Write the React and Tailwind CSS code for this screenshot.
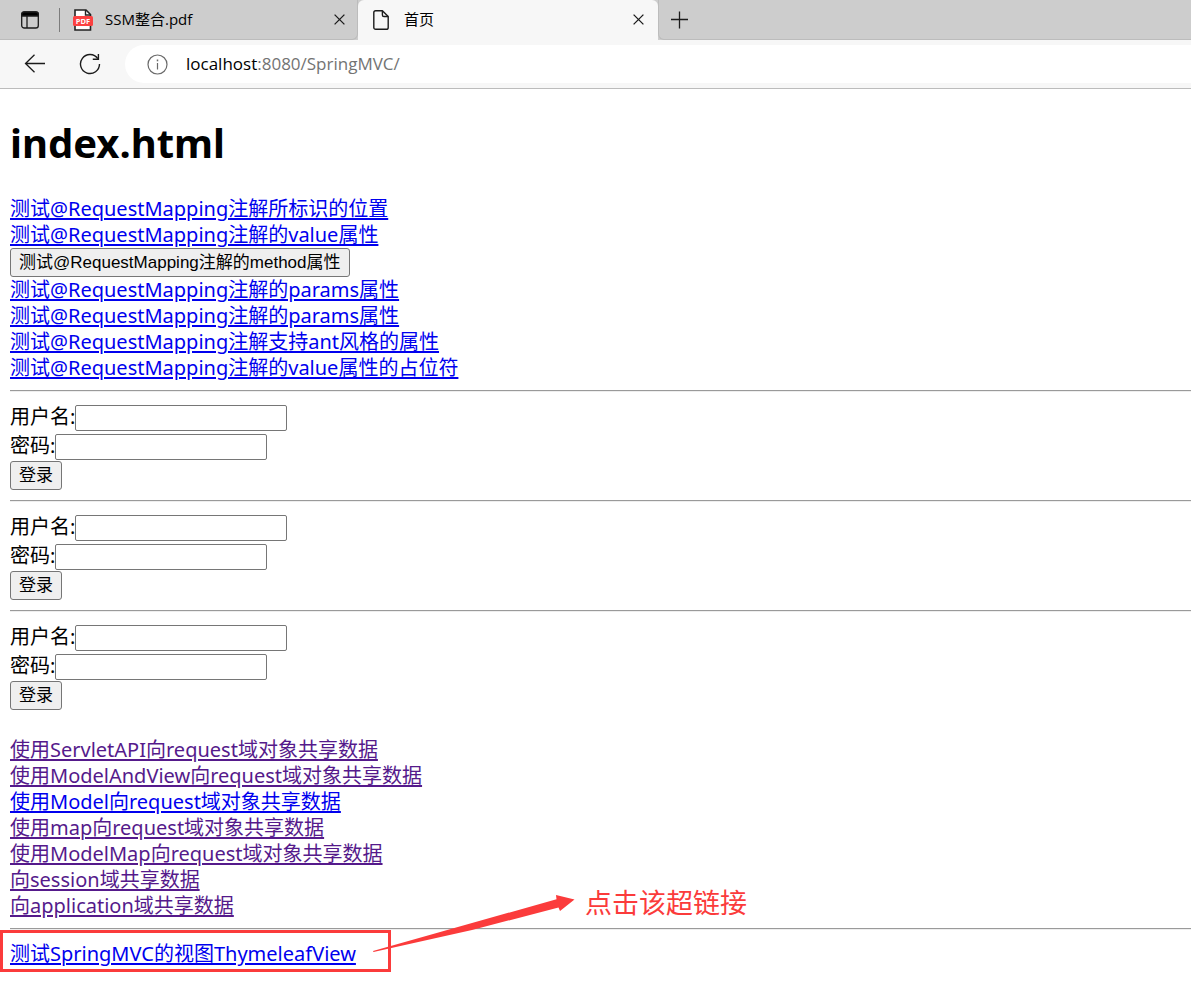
import React from "react";

const mappingLinksBefore = [
  "测试@RequestMapping注解所标识的位置",
  "测试@RequestMapping注解的value属性",
];

const mappingLinksAfter = [
  "测试@RequestMapping注解的params属性",
  "测试@RequestMapping注解的params属性",
  "测试@RequestMapping注解支持ant风格的属性",
  "测试@RequestMapping注解的value属性的占位符",
];

const scopeLinks = [
  { text: "使用ServletAPI向request域对象共享数据", visited: true },
  { text: "使用ModelAndView向request域对象共享数据", visited: true },
  { text: "使用Model向request域对象共享数据", visited: false },
  { text: "使用map向request域对象共享数据", visited: true },
  { text: "使用ModelMap向request域对象共享数据", visited: true },
  { text: "向session域共享数据", visited: true },
  { text: "向application域共享数据", visited: true },
];

function PageLink({ children, visited = false }) {
  return (
    <a
      href="#"
      className={
        visited
          ? "whitespace-nowrap text-[#551a8b] underline decoration-2 underline-offset-2"
          : "whitespace-nowrap text-[#0000ee] underline decoration-2 underline-offset-2"
      }
    >
      {children}
    </a>
  );
}

function LinkList({ items }) {
  return (
    <ul>
      {items.map((item, i) => (
        <li key={i}>
          <PageLink visited={item.visited}>{item.text}</PageLink>
        </li>
      ))}
    </ul>
  );
}

function PlainButton({ children, type = "button" }) {
  return (
    <button
      type={type}
      className="block h-[29px] rounded-[3px] border border-[#767676] bg-[#efefef] px-2 font-['Liberation_Sans','Noto_Sans_CJK_SC',sans-serif] text-[17px] leading-[27px] whitespace-nowrap text-black"
    >
      {children}
    </button>
  );
}

function Rule() {
  return <hr className="h-[2px] border-t border-b border-t-[#9a9a9a] border-b-[#eeeeee]" />;
}

function Field({ id, label, type }) {
  return (
    <div className="flex items-center">
      <label htmlFor={id}>{label}</label>
      <input
        id={id}
        type={type}
        className="mt-[3px] h-[26px] w-[212px] rounded-[2px] border border-[#767676] bg-white px-1 text-[17px]"
      />
    </div>
  );
}

function LoginForm({ index }) {
  return (
    <form className="py-[10px]" onSubmit={(e) => e.preventDefault()}>
      <Field id={"username-" + index} label="用户名:" type="text" />
      <Field id={"password-" + index} label="密码:" type="password" />
      <div className="pt-px">
        <PlainButton type="submit">登录</PlainButton>
      </div>
    </form>
  );
}

function CloseIcon() {
  return (
    <svg width="11" height="11" viewBox="0 0 11 11" fill="none" stroke="#1b1b1b" strokeWidth="1.3">
      <path d="M.6.6l9.800 9.800M10.400.6L.6 10.400" />
    </svg>
  );
}

function TabBar() {
  return (
    <div className="flex h-10 bg-[#cdcdcd] text-[15px] text-black">
      <div className="flex min-w-0 flex-1">
        <div className="flex w-[358px] shrink-0 items-center rounded-br-md border-r border-b border-[#bcbcbc] pr-3 pl-5">
          <button type="button" aria-label="标签页操作" className="shrink-0">
            <svg width="20" height="20" viewBox="0 0 20 20" fill="none" stroke="#1b1b1b" strokeWidth="1.3">
              <rect x="1.7" y="2" width="16.6" height="16" rx="2.6" />
              <path d="M1.7 6V4.6A2.6 2.6 0 0 1 4.3 2h11.4a2.6 2.6 0 0 1 2.6 2.6V6z" fill="#000" />
              <path d="M7 6v12" />
            </svg>
          </button>
          <span className="ml-[19px] h-6 w-px shrink-0 bg-[#7c7c7c]" />
          <svg className="ml-[13px] shrink-0" width="20" height="22" viewBox="0 0 20 22">
            <path d="M2 1h11l4.5 4.5V21H2z" fill="#fff" stroke="#222" strokeWidth="1.6" />
            <path d="M12.5 1v5h5" fill="none" stroke="#222" strokeWidth="1.4" />
            <rect x="0" y="7" width="20" height="10" rx="1.5" fill="#fb4141" />
            <text x="10" y="14.8" textAnchor="middle" fontSize="7.5" fontWeight="700" fill="#fff" fontFamily="Open Sans, sans-serif">
              PDF
            </text>
          </svg>
          <span className="ml-3 flex-1">SSM整合.pdf</span>
          <button type="button" aria-label="关闭 SSM整合.pdf">
            <CloseIcon />
          </button>
        </div>
        <div className="flex w-[300px] shrink-0 items-center rounded-t-md bg-[#f7f7f7] pr-[14px] pb-px pl-[15px]">
          <svg width="16" height="20" viewBox="0 0 16 20" fill="none" stroke="#1b1b1b" strokeWidth="1.4" strokeLinejoin="round">
            <path d="M.8 2.6A1.9 1.9 0 0 1 2.7.7H9.4l5.8 5.8v10.9a1.9 1.9 0 0 1-1.900 1.900H2.7A1.9 1.9 0 0 1 .8 17.4z" />
            <path d="M9.4.7v4.2a1.6 1.6 0 0 0 1.6 1.6h4.2" />
          </svg>
          <span className="ml-[15px] flex-1">首页</span>
          <button type="button" aria-label="关闭 首页">
            <CloseIcon />
          </button>
        </div>
        <div className="flex min-w-0 flex-1 items-center rounded-bl-md border-b border-l border-[#bcbcbc] pl-3">
          <button type="button" aria-label="新建标签页">
            <svg width="18" height="18" viewBox="0 0 18 18" fill="none" stroke="#1b1b1b" strokeWidth="1.3">
              <path d="M8.500 .5v17M0 8.500h17" />
            </svg>
          </button>
        </div>
      </div>
    </div>
  );
}

function AddressBar() {
  return (
    <div className="flex h-[49px] items-center border-b border-[#bcbcbc] bg-[#f7f7f7] pl-6">
      <button type="button" aria-label="后退">
        <svg width="22" height="20" viewBox="0 0 22 20" fill="none" stroke="#1b1b1b" strokeWidth="1.3">
          <path d="M21 9.500H1.500M10.500 .8L1.500 9.500l9 8.700" />
        </svg>
      </button>
      <button type="button" aria-label="刷新" className="ml-[33px]">
        <svg width="22" height="22" viewBox="0 0 22 22" fill="none" stroke="#1b1b1b" strokeWidth="1.4">
          <path d="M18.8 5.6A9.5 9.5 0 1 0 20.5 11" />
          <path d="M19.4 1v5.2h-5.6" />
        </svg>
      </button>
      <div className="ml-6 flex h-[38px] flex-1 items-center rounded-l-full bg-white pl-[22px]">
        <svg width="21" height="21" viewBox="0 0 21 21" fill="none" stroke="#6a6a6a" strokeWidth="1.2">
          <circle cx="10.5" cy="10.5" r="9.5" />
          <path d="M10.5 9v6.5" />
          <path d="M10.5 5.5v1.8" strokeWidth="1.5" />
        </svg>
        <div className="ml-[18px] text-[17px] text-[#737373]">
          <span className="text-black">localhost</span>:8080/SpringMVC/
        </div>
      </div>
    </div>
  );
}

export default function App() {
  return (
    <div className="min-h-screen overflow-x-hidden bg-white font-['Noto_Sans','Noto_Sans_CJK_SC',sans-serif] text-black">
      <header className="font-['Open_Sans','Noto_Sans_CJK_SC',sans-serif]">
        <TabBar />
        <AddressBar />
      </header>
      <main className="pb-3 pl-[10px] text-[20px] leading-[26px]">
        <h1 className="py-[27px] text-[40px] leading-[53px] font-bold">index.html</h1>
        <LinkList items={mappingLinksBefore.map((text) => ({ text }))} />
        <PlainButton>测试@RequestMapping注解的method属性</PlainButton>
        <LinkList items={mappingLinksAfter.map((text) => ({ text }))} />
        <div className="mt-[9px]">
          {[1, 2, 3].map((n) => (
            <React.Fragment key={n}>
              <Rule />
              <LoginForm index={n} />
            </React.Fragment>
          ))}
        </div>
        <div className="pt-[17px] pb-[9px]">
          <LinkList items={scopeLinks} />
        </div>
        <Rule />
        <div className="relative mt-[11px]">
          <PageLink>测试SpringMVC的视图ThymeleafView</PageLink>
          <div className="pointer-events-none absolute -top-[11px] -left-[10px] h-[42px] w-[391px] border-[3px] border-[#fb3b3b]" />
          <svg className="pointer-events-none absolute -top-[51px] left-[362px]" width="206" height="66" viewBox="0 0 206 66">
            <path d="M1 61L184.500 9.200L184 5L202.500 9.500L188 21L186.500 17.500L100 40L1.500 62z" fill="#fb3b3b" />
          </svg>
          <p className="absolute -top-[56px] left-[575px] text-[27px] leading-[36px] whitespace-nowrap text-[#fb3b3b]">
            点击该超链接
          </p>
        </div>
      </main>
    </div>
  );
}
